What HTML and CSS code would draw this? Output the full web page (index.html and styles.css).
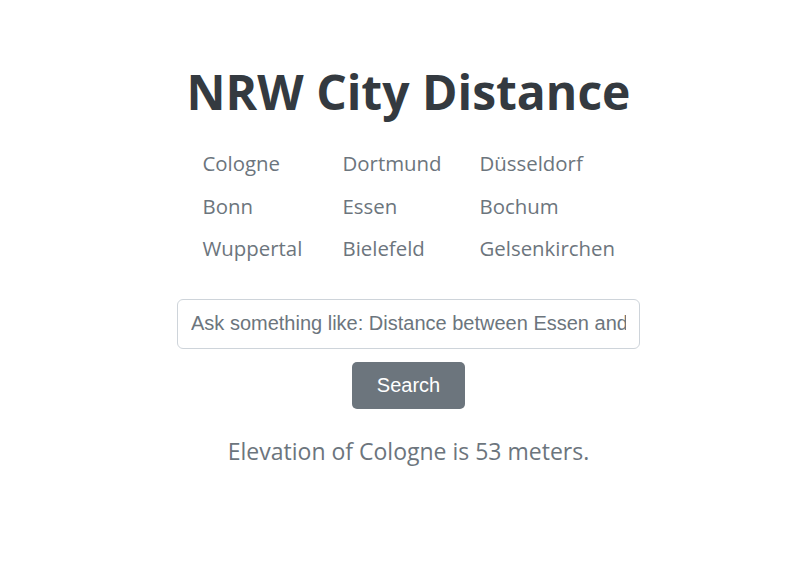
FILE: index.html
```html
<!DOCTYPE html>
<html lang="en">
<head>
<meta charset="utf-8">
<title>NRW City Distance</title>
<link rel="stylesheet" href="styles.css">
</head>
<body>
<main class="page">
  <h1 class="title">NRW City Distance</h1>
  <ul class="cities">
    <li>Cologne</li><li>Dortmund</li><li>Düsseldorf</li>
    <li>Bonn</li><li>Essen</li><li>Bochum</li>
    <li>Wuppertal</li><li>Bielefeld</li><li>Gelsenkirchen</li>
  </ul>
  <form class="search" onsubmit="return false">
    <input class="query" type="text" placeholder="Ask something like: Distance between Essen and Bonn">
    <button class="btn" type="submit">Search</button>
  </form>
  <p class="result">Elevation of Cologne is 53 meters.</p>
</main>
</body>
</html>
```
FILE: styles.css
```css
* { box-sizing: border-box; }
html, body { margin: 0; padding: 0; background: #fff; }
body {
  font-family: "Open Sans", "Noto Sans", sans-serif;
  color: #6c757d;
}
.page {
  padding: 56px 0 0 16px;
  display: flex;
  flex-direction: column;
  align-items: center;
}
.title {
  margin: 0;
  font-size: 48px;
  font-weight: 700;
  color: #343a40;
  line-height: 72px;
}
.cities {
  list-style: none;
  margin: 20px 0 0 0;
  padding: 0;
  display: grid;
  grid-template-columns: 140px 137px 135px;
  grid-auto-rows: 42.5px;
  font-size: 20.4px;
  line-height: 30px;
}
.search {
  margin-top: 23px;
  display: flex;
  flex-direction: column;
  align-items: center;
  gap: 13px;
}
.query {
  width: 463px;
  height: 50px;
  border: 1px solid #ced4da;
  border-radius: 6px;
  padding: 0 13px;
  font-family: "Liberation Sans", Arial, sans-serif;
  font-size: 20px;
  color: #495057;
}
.query::placeholder { color: #6c757d; opacity: 1; }
.btn {
  width: 113px;
  height: 47px;
  border: 0;
  border-radius: 5px;
  background: #6c757d;
  color: #fff;
  font-family: "Liberation Sans", Arial, sans-serif;
  font-size: 20px;
}
.result {
  margin: 25px 0 0 0;
  font-size: 23px;
  line-height: 34px;
}
```
